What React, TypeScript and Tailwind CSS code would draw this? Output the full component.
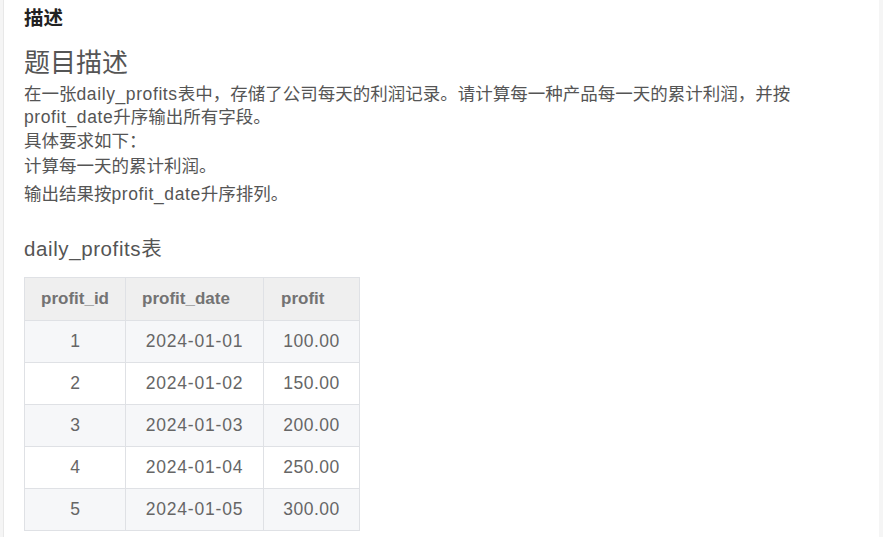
import React from "react";

const rows = [
  ["1", "2024-01-01", "100.00"],
  ["2", "2024-01-02", "150.00"],
  ["3", "2024-01-03", "200.00"],
  ["4", "2024-01-04", "250.00"],
  ["5", "2024-01-05", "300.00"],
];

const L = ({ children }: { children: React.ReactNode }) => (
  <span className="tracking-[0.6px]">{children}</span>
);

export default function App() {
  return (
    <div
      className="w-[883px] h-[537px] bg-[#f5f5f5] pl-[3px] pr-[4px] overflow-hidden"
      style={{ fontFamily: '"Liberation Sans", "Noto Sans CJK SC", sans-serif' }}
    >
      <div className="h-full bg-white border-l border-[#e8e8e8] pl-[20px] pr-[20px] pt-[6px]">
        <h2 className="text-[19.5px] leading-[24px] font-bold text-[#222]">描述</h2>
        <h1 className="mt-[17px] text-[26px] leading-[32px] text-[#555]">题目描述</h1>
        <div className="text-[17.5px] text-[#555] mt-[4px]">
          <p className="leading-[23px]">
            在一张<L>daily_profits</L>表中，存储了公司每天的利润记录。请计算每一种产品每一天的累计利润，并按<L>profit_date</L>升序输出所有字段。
          </p>
          <p className="leading-[24px]">具体要求如下：</p>
          <p className="leading-[26px]">计算每一天的累计利润。</p>
          <p className="leading-[26px] mt-[2px]">
            输出结果按<L>profit_date</L>升序排列。
          </p>
        </div>
        <h3 className="mt-[28px] text-[20.5px] leading-[28px] text-[#555]">
          <L>daily_profits</L>表
        </h3>
        <table className="mt-[14px] border-collapse text-[17.5px] text-[#666]">
          <thead>
            <tr className="bg-[#efefef]">
              <th className="w-[101px] h-[43px] border border-[#dfe1e5] pl-4 text-left text-[17px] font-semibold text-[#737373]">profit_id</th>
              <th className="w-[138px] h-[43px] border border-[#dfe1e5] pl-4 text-left text-[17px] font-semibold text-[#737373]">profit_date</th>
              <th className="w-[96px] h-[43px] border border-[#dfe1e5] pl-[17px] text-left text-[17px] font-semibold text-[#737373]">profit</th>
            </tr>
          </thead>
          <tbody>
            {rows.map((r, i) => (
              <tr key={r[0]} className={i % 2 === 0 ? "bg-[#f6f7f9]" : "bg-white"}>
                <td className="h-[42px] border border-[#dfe1e5] text-center">{r[0]}</td>
                <td className="h-[42px] border border-[#dfe1e5] text-center tracking-[0.8px]">{r[1]}</td>
                <td className="h-[42px] border border-[#dfe1e5] text-center tracking-[0.5px]">{r[2]}</td>
              </tr>
            ))}
          </tbody>
        </table>
      </div>
    </div>
  );
}
